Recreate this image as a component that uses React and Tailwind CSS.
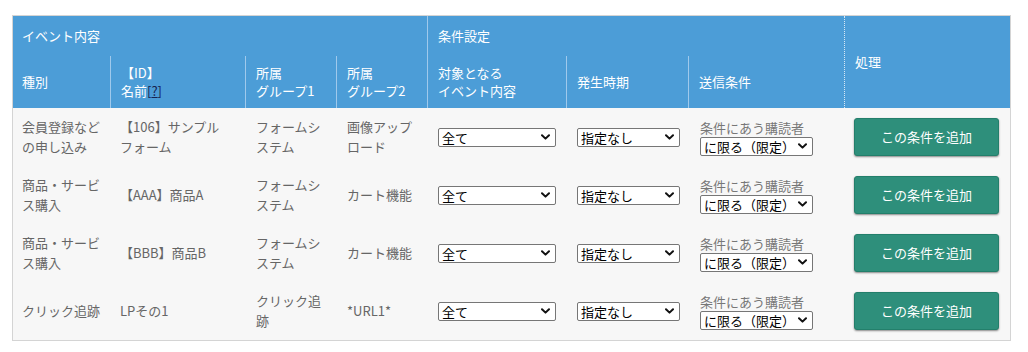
import React from "react";

const FONT = { fontFamily: '"Noto Sans CJK JP", "Noto Sans", sans-serif' };

function Chevron() {
  return (
    <svg className="pointer-events-none absolute right-[5px] top-1/2 -translate-y-1/2" width="9" height="6" viewBox="0 0 9 6">
      <path d="M1 1.2 L4.5 4.6 L8 1.2" fill="none" stroke="#111" strokeWidth="2" strokeLinecap="round" strokeLinejoin="round" />
    </svg>
  );
}

function Sel({ w, value }) {
  return (
    <div className={`relative h-[19px] rounded-[2px] border border-[#767676] bg-white ${w}`}>
      <select
        defaultValue={value}
        className="block h-full w-full appearance-none bg-transparent pl-[3px] pr-[14px] text-[13px] leading-[17px] text-black outline-none"
        style={FONT}
      >
        <option>{value}</option>
      </select>
      <Chevron />
    </div>
  );
}

const rows = [
  { kind: ["会員登録など", "の申し込み"], name: ["【106】サンプル", "フォーム"], g1: ["フォームシ", "ステム"], g2: ["画像アップ", "ロード"] },
  { kind: ["商品・サービ", "ス購入"], name: ["【AAA】商品A"], g1: ["フォームシ", "ステム"], g2: ["カート機能"] },
  { kind: ["商品・サービ", "ス購入"], name: ["【BBB】商品B"], g1: ["フォームシ", "ステム"], g2: ["カート機能"] },
  { kind: ["クリック追跡"], name: ["LPその1"], g1: ["クリック追", "跡"], g2: ["*URL1*"] },
];

function Lines({ lines }) {
  return (
    <div className="whitespace-nowrap text-[13px] leading-[20px] text-[#666]">
      {lines.map((l, i) => (
        <div key={i}>{l}</div>
      ))}
    </div>
  );
}

export default function App() {
  const hdr = "flex items-center text-[13px] leading-[18px] text-white whitespace-nowrap";
  const sep = "border-l border-[#9fc9ec]";
  const body = "flex h-[58px] items-center bg-[#f7f7f7]";
  return (
    <div className="min-h-[352px] bg-white pl-[12px] pt-[15px]" style={FONT}>
      <div className="w-[999px] border border-[#d4d4d4]">
        <div className="grid grid-cols-[97px_135px_91px_91px_139px_122px_156px_166px] grid-rows-[40px_52px] bg-[#4c9dd7]">
          <div className={`${hdr} col-span-4 pl-[9px]`}>イベント内容</div>
          <div className={`${hdr} col-span-3 ${sep} pl-[10px]`}>条件設定</div>
          <div className={`${hdr} row-span-2 border-l border-dotted border-[#d8e8f5] pl-[10px]`}>処理</div>

          <div className={`${hdr} pl-[9px]`}>種別</div>
          <div className={`${hdr} ${sep} pl-[10px]`}>
            <div>
              <div>【ID】</div>
              <div>
                名前<span className="text-[#16234f]">[<span className="underline">?</span>]</span>
              </div>
            </div>
          </div>
          <div className={`${hdr} ${sep} pl-[10px]`}>
            <div>
              <div>所属</div>
              <div>グループ1</div>
            </div>
          </div>
          <div className={`${hdr} ${sep} pl-[10px]`}>
            <div>
              <div>所属</div>
              <div>グループ2</div>
            </div>
          </div>
          <div className={`${hdr} ${sep} pl-[10px]`}>
            <div>
              <div>対象となる</div>
              <div>イベント内容</div>
            </div>
          </div>
          <div className={`${hdr} ${sep} pl-[10px]`}>発生時期</div>
          <div className={`${hdr} ${sep} pl-[10px]`}>送信条件</div>
        </div>

        <div className="grid grid-cols-[97px_135px_91px_91px_139px_122px_156px_166px]">
          {rows.map((r, i) => (
            <React.Fragment key={i}>
              <div className={`${body} pl-[9px]`}>
                <Lines lines={r.kind} />
              </div>
              <div className={`${body} pl-[10px]`}>
                <Lines lines={r.name} />
              </div>
              <div className={`${body} pl-[11px]`}>
                <Lines lines={r.g1} />
              </div>
              <div className={`${body} pl-[11px]`}>
                <Lines lines={r.g2} />
              </div>
              <div className={`${body} pl-[11px]`}>
                <Sel w="w-[118px]" value="全て" />
              </div>
              <div className={`${body} pl-[11px]`}>
                <Sel w="w-[103px]" value="指定なし" />
              </div>
              <div className={`${body} pl-[12px]`}>
                <div className="flex flex-col">
                  <div className="text-[13px] leading-[18px] text-[#777]">条件にあう購読者</div>
                  <Sel w="w-[113px]" value="に限る（限定）" />
                </div>
              </div>
              <div className={`${body} pl-[10px]`}>
                <button
                  className="h-[38px] w-[145px] rounded-[3px] border border-[#237f6b] bg-[#2e8f7b] text-[13px] text-white shadow-[0_1px_2px_rgba(0,0,0,0.45)]"
                  style={FONT}
                >
                  この条件を追加
                </button>
              </div>
            </React.Fragment>
          ))}
        </div>
      </div>
    </div>
  );
}
